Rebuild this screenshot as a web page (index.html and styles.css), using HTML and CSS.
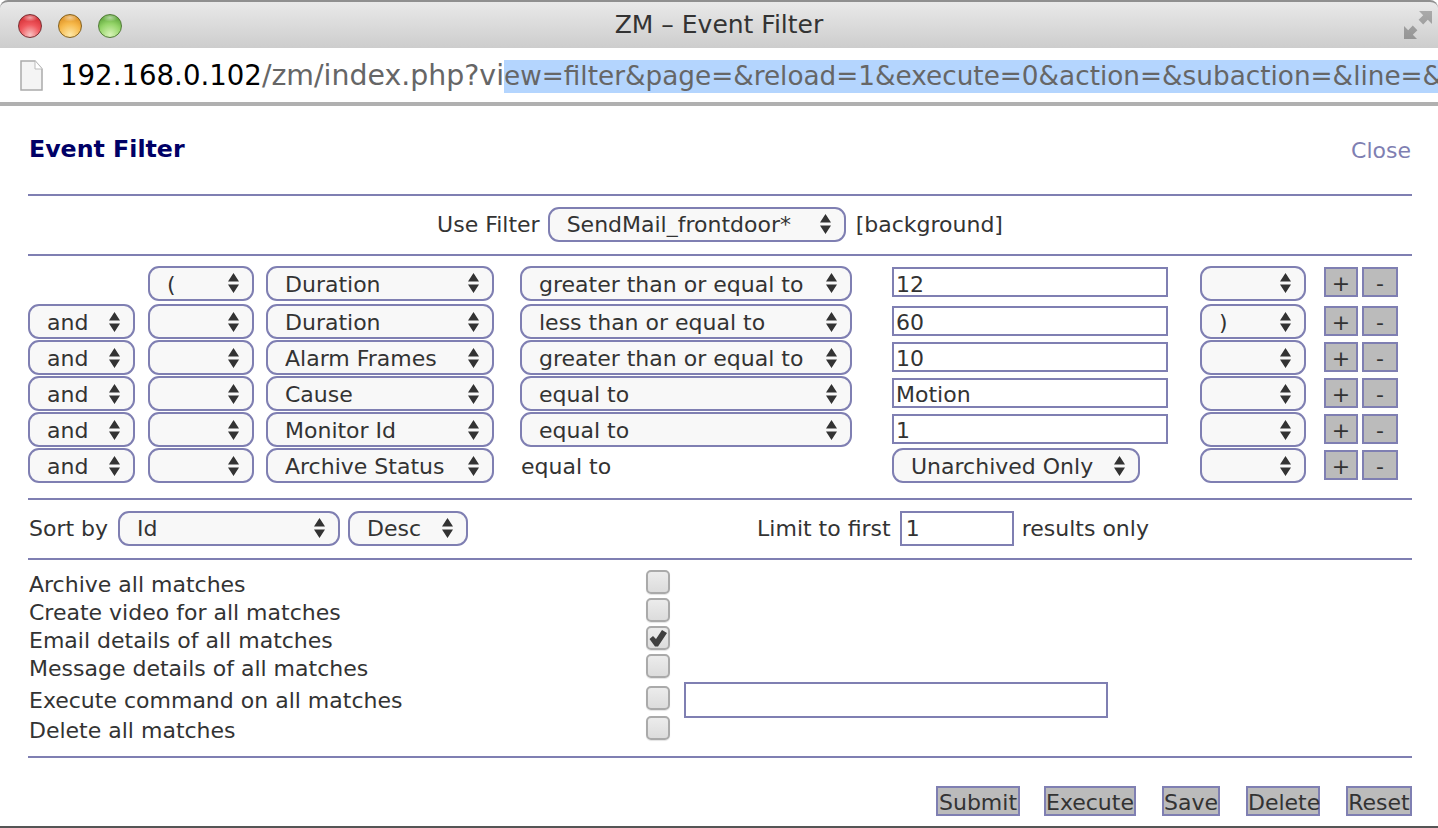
FILE: index.html
```html
<!DOCTYPE html>
<html lang="en">
<head>
<meta charset="utf-8">
<title>ZM - Event Filter</title>
<link rel="stylesheet" href="styles.css">
</head>
<body>
<div class="titlebar">
  <div class="lights"><span class="light red"></span><span class="light amber"></span><span class="light green"></span></div>
  <div class="wintitle">ZM – Event Filter</div>
  <svg class="fullscreen" width="28" height="28" viewBox="0 0 28 28"><defs><linearGradient id="fs" x1="0" y1="0" x2="0" y2="1"><stop offset="0" stop-color="#aaa"/><stop offset="1" stop-color="#959595"/></linearGradient></defs><path fill="url(#fs)" d="M28 0v13l-4.200-4.200-4.600 4.600-4.600-4.600 4.600-4.600L15 0zM0 28V15l4.200 4.200 4.600-4.600 4.600 4.600-4.600 4.600L13 28z"/></svg>
</div>
<div class="urlbar">
  <svg class="pageicon" width="23" height="31" viewBox="0 0 23 31"><path fill="#f4f4f4" stroke="#aaa" stroke-width="1.500" d="M1 1h14l7 8v21H1z"/><path fill="#fff" stroke="#bbb" d="M15 1v8h7"/></svg>
  <div class="url"><span class="host">192.168.0.102</span><span class="path">/zm/index.php?vi</span><span class="sel">ew=filter&amp;page=&amp;reload=1&amp;execute=0&amp;action=&amp;subaction=&amp;line=&amp;fid=SendMail_frontdoor</span></div>
</div>
<main class="page">
  <header class="head"><h1>Event Filter</h1><a class="close" href="#">Close</a></header>
  <hr>
  <form class="usefilter">
    <span>Use Filter</span>
    <select class="sel-use"><option>SendMail_frontdoor*</option></select>
    <span class="bg-note">[background]</span>
  </form>
  <hr>
  <div class="terms">
    <div class="term first">
      <span></span>
      <select class="w-paren"><option>(</option></select>
      <select class="w-attr"><option>Duration</option></select>
      <select class="w-op"><option>greater than or equal to</option></select>
      <input class="w-val" type="text" value="12">
      <select class="w-paren"><option></option></select>
      <button class="pm plus" type="button">+</button><button class="pm minus" type="button">-</button>
    </div>
    <div class="term">
      <select class="w-and"><option>and</option></select>
      <select class="w-paren"><option></option></select>
      <select class="w-attr"><option>Duration</option></select>
      <select class="w-op"><option>less than or equal to</option></select>
      <input class="w-val" type="text" value="60">
      <select class="w-paren"><option>)</option></select>
      <button class="pm plus" type="button">+</button><button class="pm minus" type="button">-</button>
    </div>
    <div class="term">
      <select class="w-and"><option>and</option></select>
      <select class="w-paren"><option></option></select>
      <select class="w-attr"><option>Alarm Frames</option></select>
      <select class="w-op"><option>greater than or equal to</option></select>
      <input class="w-val" type="text" value="10">
      <select class="w-paren"><option></option></select>
      <button class="pm plus" type="button">+</button><button class="pm minus" type="button">-</button>
    </div>
    <div class="term">
      <select class="w-and"><option>and</option></select>
      <select class="w-paren"><option></option></select>
      <select class="w-attr"><option>Cause</option></select>
      <select class="w-op"><option>equal to</option></select>
      <input class="w-val" type="text" value="Motion">
      <select class="w-paren"><option></option></select>
      <button class="pm plus" type="button">+</button><button class="pm minus" type="button">-</button>
    </div>
    <div class="term">
      <select class="w-and"><option>and</option></select>
      <select class="w-paren"><option></option></select>
      <select class="w-attr"><option>Monitor Id</option></select>
      <select class="w-op"><option>equal to</option></select>
      <input class="w-val" type="text" value="1">
      <select class="w-paren"><option></option></select>
      <button class="pm plus" type="button">+</button><button class="pm minus" type="button">-</button>
    </div>
    <div class="term">
      <select class="w-and"><option>and</option></select>
      <select class="w-paren"><option></option></select>
      <select class="w-attr"><option>Archive Status</option></select>
      <span class="op-text">equal to</span>
      <select class="w-arch"><option>Unarchived Only</option></select>
      <select class="w-paren"><option></option></select>
      <button class="pm plus" type="button">+</button><button class="pm minus" type="button">-</button>
    </div>
  </div>
  <hr>
  <div class="sortrow">
    <span>Sort by</span>
    <select class="w-sort"><option>Id</option></select>
    <select class="w-dir"><option>Desc</option></select>
    <span class="limit">Limit to first</span>
    <input class="w-limit" type="text" value="1">
    <span>results only</span>
  </div>
  <hr>
  <div class="actions">
    <label class="act"><span class="act-name">Archive all matches</span><input type="checkbox"></label>
    <label class="act"><span class="act-name">Create video for all matches</span><input type="checkbox"></label>
    <label class="act"><span class="act-name">Email details of all matches</span><input type="checkbox" checked></label>
    <label class="act"><span class="act-name">Message details of all matches</span><input type="checkbox"></label>
    <label class="act tall"><span class="act-name">Execute command on all matches</span><input type="checkbox"><input class="w-cmd" type="text"></label>
    <label class="act last"><span class="act-name">Delete all matches</span><input type="checkbox"></label>
  </div>
  <hr>
  <div class="buttons">
    <button class="b-submit" type="button">Submit</button>
    <button class="b-execute" type="button">Execute</button>
    <button class="b-save" type="button">Save</button>
    <button class="b-delete" type="button">Delete</button>
    <button class="b-reset" type="button">Reset</button>
  </div>
</main>
</body>
</html>
```
FILE: styles.css
```css
* { box-sizing: border-box; }
html, body { margin: 0; height: 828px; overflow: hidden; background: #fff; }
body {
  font-family: "DejaVu Sans", Verdana, sans-serif;
  font-size: 22px;
  color: #333;
  border-bottom: 2px solid #555;
}
.titlebar {
  height: 48px;
  display: flex;
  align-items: center;
  position: relative;
  justify-content: center;
  background: linear-gradient(#e9e9e9, #cdcdcd);
  border-top: 2px solid #8f8f8f;
  border-radius: 8px 8px 0 0;
  padding-bottom: 2px;
}
.lights { position: absolute; left: 18px; top: 12px; display: flex; gap: 16px; }
.light { width: 24px; height: 24px; border-radius: 50%; display: block; }
.red { background: radial-gradient(ellipse 8px 4px at 50% 12%, rgba(255,255,255,.55), transparent), radial-gradient(circle at 50% 90%, #f8c4c4 0, #f0585e 45%, #d8343a 78%); border: 1px solid #7a3034; }
.amber { background: radial-gradient(ellipse 8px 4px at 50% 12%, rgba(255,255,255,.5), transparent), radial-gradient(circle at 50% 90%, #fde8a8 0, #f6b84a 50%, #e0962a 78%); border: 1px solid #84621f; }
.green { background: radial-gradient(ellipse 8px 4px at 50% 12%, rgba(255,255,255,.5), transparent), radial-gradient(circle at 50% 90%, #d8f4b8 0, #94d468 50%, #66ac42 78%); border: 1px solid #527c38; }
.wintitle { font-size: 25px; color: #333; }
.fullscreen { position: absolute; right: 6px; top: 9px; }
.urlbar {
  height: 54px;
  display: flex;
  align-items: flex-start;
  background: #fff;
  margin: 0 2px 0 4px;
  padding-top: 12px;
  padding-left: 16px;
}
.pageicon { flex: none; margin-right: 17px; }
.url {
  flex: 1;
  min-width: 0;
  margin-right: -2px;
  height: 36px;
  overflow: hidden;
  font-size: 28px;
  line-height: 32px;
  color: #666;
  white-space: nowrap;
}
.host { color: #000; font-size: 27.600px; }
.path { font-size: 28.400px; }
.sel { background: #b4d5fe; padding: 2px 0; font-size: 26.300px; }
.page { padding: 0 26px 0 28px; border-top: 4px solid #b0b0b0; }
hr { border: 0; height: 2px; background: #7f7fb2; margin: 0; }
.head { height: 88px; display: flex; justify-content: space-between; align-items: flex-start; padding-top: 27px; }
h1 { margin: 0 0 0 1px; font-size: 23.700px; line-height: 32px; color: #000066; font-weight: bold; }
.close { color: #7f7fb2; text-decoration: none; line-height: 32px; margin-top: 2px; margin-right: 1px; }
select {
  appearance: none;
  -webkit-appearance: none;
  height: 35px;
  font: inherit;
  color: #333;
  background-color: #f8f8f8;
  background-image: url("data:image/svg+xml,%3Csvg xmlns='http://www.w3.org/2000/svg' width='11' height='20'%3E%3Cpath fill='%23333' d='M5.500 0l5.500 8.500H0zM5.500 20l5.500-8.500H0z'/%3E%3C/svg%3E");
  background-repeat: no-repeat;
  background-position: right 13px center;
  border: 2px solid #7f7fb2;
  border-radius: 11px;
  padding: 0 30px 0 17px;
  margin: 0;
}
input[type="text"] {
  font: inherit;
  color: #333;
  background: #fff;
  border: 2px solid #7f7fb2;
  border-radius: 0;
  padding: 0 4px;
  margin: 0;
  outline: 0;
}
.usefilter { display: flex; justify-content: center; align-items: center; gap: 8px; height: 58px; padding: 0 0 2px; }
.sel-use { width: 298px; }
.bg-note { margin-left: 2px; }
.terms { padding: 8px 0 14px; }
.term {
  display: grid;
  grid-template-columns: 120px 118px 254px 372px 308px 124px 38px 36px;
  align-items: center;
  height: 36px;
}
.term.first { height: 40px; }
.term select { margin-bottom: 2px; padding-top: 2px; }
.w-and { width: 107px; }
.w-paren { width: 106px; }
.w-attr { width: 228px; }
.w-op { width: 332px; }
input.w-val { width: 276px; height: 30px; padding: 4px 2px 0; margin-bottom: 4px; }
.w-arch { width: 248px; }
.op-text { padding-left: 1px; }
.pm {
  height: 30px;
  padding: 2px 0 0;
  margin-bottom: 4px;
  font: inherit;
  color: #333;
  background: #bbb;
  border: 2px solid #7f7fb2;
  border-radius: 0;
}
.plus { width: 34px; }
.minus { width: 36px; }
.sortrow { display: flex; align-items: center; height: 58px; padding-bottom: 2px; }
.sortrow > span:first-child { margin-left: 1px; }
.w-sort { width: 222px; margin: 0 8px 0 10px; }
.w-dir { width: 120px; }
.limit { margin-left: 289px; margin-right: 9px; }
input.w-limit { width: 114px; height: 35px; margin-right: 8px; }
.actions { padding: 10px 0 14px; }
.act { display: flex; align-items: center; height: 28px; }
.act.tall { height: 36px; }
.act.last { height: 24px; }
.act-name { width: 618px; padding-left: 1px; flex: none; }
input[type="checkbox"] {
  appearance: none;
  -webkit-appearance: none;
  width: 24px;
  height: 24px;
  margin: 0 0 4px;
  flex: none;
  border: 2px solid #aaa;
  border-radius: 5px;
  background: linear-gradient(#ececec, #dcdcdc);
  box-shadow: 0 1px 1px #e4e4e4;
}
input[type="checkbox"]:checked {
  background-image: url("data:image/svg+xml,%3Csvg xmlns='http://www.w3.org/2000/svg' viewBox='0 0 20 20'%3E%3Cpath fill='%23404040' d='M1.500 11l3.500-3 3 3L14 2l5 3-9 13.500H7z'/%3E%3C/svg%3E"), linear-gradient(#ececec, #dcdcdc);
  background-size: 100% 100%;
}
input.w-cmd { width: 424px; height: 36px; margin-left: 14px; }
.buttons { display: flex; justify-content: flex-end; gap: 26px; padding-top: 28px; }
.buttons button {
  height: 30px;
  padding: 2px 0 0;
  font: inherit;
  color: #333;
  background: #bbb;
  border: 2px solid #7f7fb2;
  border-radius: 0;
  white-space: nowrap;
  overflow: visible;
}
.buttons .b-submit { width: 84px; margin-right: -2px; }
.buttons .b-execute { width: 92px; }
.buttons .b-save { width: 58px; }
.buttons .b-delete { width: 74px; }
.buttons .b-reset { width: 66px; }
```
